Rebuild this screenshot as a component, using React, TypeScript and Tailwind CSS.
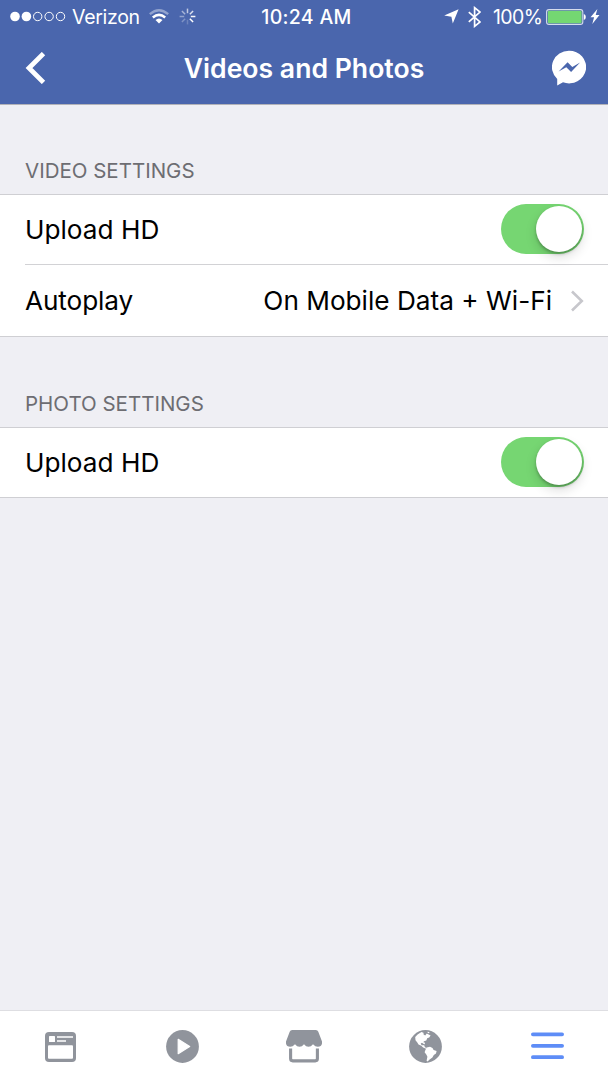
import { useState } from "react";
import type { ReactNode } from "react";

const SPINNER_OPACITY = [0.65, 0.8, 0.95, 1, 0.2, 0.3, 0.4, 0.5];

function StatusBar() {
  return (
    <div className="grid h-[34px] grid-cols-[1fr_auto_1fr] items-center text-[20px] leading-[34px]">
      <div className="flex items-center pl-2.5">
        <svg className="mb-px h-[11px] w-[56px]" viewBox="0 0 56 11" aria-hidden>
          <circle cx="5" cy="5.5" r="4.8" fill="white" />
          <circle cx="16.4" cy="5.5" r="4.8" fill="white" />
          {[27.7, 39.1, 50.5].map((cx) => (
            <circle key={cx} cx={cx} cy="5.5" r="4.2" fill="none" stroke="white" strokeWidth="1" />
          ))}
        </svg>
        <span className="ml-[6px] w-[77px] text-[19.5px] tracking-[-0.3px]">Verizon</span>
        <svg className="mb-px h-[15px] w-[20px]" viewBox="0 0 20 15" fill="none" aria-hidden>
          <path d="M.8 5.2Q10-2.8 19.2 5.2" stroke="white" strokeOpacity=".4" strokeWidth="2.3" />
          <path d="M3.8 8.5Q10 3.2 16.2 8.5" stroke="white" strokeWidth="2.5" />
          <path d="M6.5 11.1Q10 8.1 13.5 11.1L10 14.6Z" fill="white" />
        </svg>
        <svg className="mb-px ml-2.5 h-[17px] w-[17px]" viewBox="0 0 17 17" aria-hidden>
          {SPINNER_OPACITY.map((opacity, i) => (
            <path
              key={i}
              d="M8.5.6V5.2"
              stroke="white"
              strokeWidth="1.5"
              strokeOpacity={opacity}
              transform={`rotate(${i * 45} 8.5 8.5)`}
            />
          ))}
        </svg>
      </div>
      <span className="pl-[5px] text-[19.5px] font-medium tracking-[0.3px]">10:24 AM</span>
      <div className="flex items-center justify-end pr-[8px]">
        <svg className="mb-px h-[15px] w-[15px]" viewBox="0 0 15 15" aria-hidden>
          <path d="M14.6.2L8.8 14.5 7.4 7.8.2 6.5Z" fill="white" />
        </svg>
        <svg className="mb-px ml-[9px] h-[22px] w-[13px]" viewBox="0 0 13 22" fill="none" aria-hidden>
          <path d="M.8 6.1L12 15.9 6.6 20.3V1.7L12 6.1.8 15.9" stroke="white" strokeWidth="1.7" />
        </svg>
        <span className="ml-[12px] w-[53px] whitespace-nowrap text-[19.5px] tracking-[-0.6px]">100%</span>
        <svg className="mb-px h-[16px] w-[40px]" viewBox="0 0 40 16" aria-hidden>
          <rect x=".6" y=".6" width="36.2" height="14.8" rx="2.4" fill="none" stroke="#d5dcec" strokeWidth="1.1" />
          <rect x="1.8" y="1.8" width="33.8" height="12.4" rx="1.2" fill="#74d772" />
          <path d="M37.8 5Q39.8 5.5 39.8 8T37.8 11Z" fill="white" />
        </svg>
        <svg className="mb-px ml-[4px] h-[15px] w-[10px]" viewBox="0 0 10 15" aria-hidden>
          <path d="M7.4 0L.5 8.2H4.1L2.3 15 9.5 6.1H5.7Z" fill="white" />
        </svg>
      </div>
    </div>
  );
}

function NavBar() {
  return (
    <div className="grid h-[68px] grid-cols-[1fr_auto_1fr] items-center">
      <button type="button" aria-label="Back" className="pl-[25px]">
        <svg className="h-[32px] w-[21px]" viewBox="0 0 21 32" fill="none" aria-hidden>
          <path d="M18.5 1.6L4 16 18.5 30.4" stroke="white" strokeWidth="4.8" />
        </svg>
      </button>
      <h1 className="pt-[2px] text-[26.6px] font-semibold">Videos and Photos</h1>
      <button type="button" aria-label="Messenger" className="flex justify-end pr-[22px]">
        <svg className="h-[36px] w-[34px]" viewBox="0 0 34 36" aria-hidden>
          <path
            d="M17 .8A17 16.3 0 0 0 5.2 28.9V35.6L11 32.3A17 16.3 0 1 0 17 .8Z"
            fill="white"
          />
          <path d="M6.6 21.6L15.6 12.2 20.3 16.9 28.1 12.5 19.1 22 14.3 17.3Z" fill="#4a66ad" />
        </svg>
      </button>
    </div>
  );
}

function Toggle({ label }: { label: string }) {
  const [on, setOn] = useState(true);
  return (
    <button
      type="button"
      role="switch"
      aria-checked={on}
      aria-label={label}
      onClick={() => setOn(!on)}
      className={`mb-px flex h-[50px] w-[83px] items-center rounded-full px-[2px] ${
        on ? "justify-end bg-[#76d672]" : "justify-start bg-[#e5e5ea]"
      }`}
    >
      <span className="h-[46px] w-[46px] rounded-full bg-white shadow-[0_5px_12px_rgba(0,0,0,0.14),0_2px_3px_rgba(0,0,0,0.25)]" />
    </button>
  );
}

function Section({ title, children }: { title: string; children: ReactNode }) {
  return (
    <section>
      <h2 className="flex h-[90px] items-end pb-[8px] pl-[25px] text-[20.5px] leading-[30px] text-[#6d6d72]">
        {title}
      </h2>
      <div className="border-y border-[#cfcfd3] bg-white pl-[25px] text-[26.2px] text-black">
        {children}
      </div>
    </section>
  );
}

function NewsFeedIcon() {
  return (
    <svg className="h-[30px] w-[31px]" viewBox="0 0 31 30" aria-hidden>
      <rect width="31" height="30" rx="4" fill="#90949c" />
      <rect x="4" y="4" width="6" height="6" rx=".6" fill="white" />
      <path d="M12 5H28M12 9H21" stroke="white" strokeWidth="1.7" />
      <rect x="3" y="13.2" width="25" height="13.5" rx="1" fill="white" />
    </svg>
  );
}

function PlayIcon() {
  return (
    <svg className="h-[33px] w-[33px]" viewBox="0 0 33 33" aria-hidden>
      <circle cx="16.5" cy="16.5" r="16.4" fill="#90949c" />
      <path d="M12.2 9.3L23.7 16.5 12.2 23.7Z" fill="white" stroke="white" strokeWidth="1.2" strokeLinejoin="round" />
    </svg>
  );
}

function StoreIcon() {
  return (
    <svg className="h-[33px] w-[36px]" viewBox="0 0 36 33" fill="#90949c" aria-hidden>
      <path d="M6.2 0H29.8Q31.7 0 32.3 1.8L36 11.5V13.5Q35.4 16.8 31.8 16.8 29.3 16.8 27 14.2 25 16.8 22.5 16.8 20 16.8 18 14.2 16 16.8 13.5 16.8 11 16.8 9 14.2 6.7 16.8 4.2 16.8.6 16.8 0 13.5V11.5L3.7 1.8Q4.3 0 6.2 0Z" />
      <path
        d="M4.6 18.6V28.6Q4.6 30.9 6.8 30.9H29.2Q31.4 30.9 31.4 28.6V18.6"
        fill="none"
        stroke="#90949c"
        strokeWidth="3.1"
      />
    </svg>
  );
}

function GlobeIcon() {
  return (
    <svg className="h-[33px] w-[33px]" viewBox="0 0 33 33" aria-hidden>
      <circle cx="16.5" cy="16.5" r="16.4" fill="#90949c" />
      <g fill="white">
        <path d="M8.6 4.4L12.4 2 14.5 2.8 14.6 4.6 16.2 5.4 17.8 3.6 21.6 5.4 20.2 7.6 18.2 8.2 17.3 10.4 15 11.3 14.3 12.2 15.7 12.6 16 14.2 14.7 14.1 13 12.8 11.7 13.4 12.6 15.2 15.2 15.2 15.9 17.3 17.7 18 17 18.8 14.1 17.5 12.3 15.8 9.5 14.4 8.3 12.5 6.5 10.3 6.2 7Z" />
        <path d="M17.6 17.6L21 16.7 23.5 17.9 24.6 20 27.6 21 27 23.4 24.8 25 23.4 27.4 20.6 29.4 18.6 31.4 17.6 30.8 18.4 26.7 17.3 24.5 15.6 22.2 16.4 20.1Z" />
        <path d="M18.4 1.7L20.4 2 20.2 3.2 18.8 3Z" />
      </g>
    </svg>
  );
}

function MenuIcon() {
  return (
    <svg className="mb-px h-[28px] w-[33px]" viewBox="0 0 33 28" aria-hidden>
      <path d="M1.9 2.3H31.1M1.9 13.8H31.1M1.9 25.2H31.1" stroke="#5e8df7" strokeWidth="3.8" strokeLinecap="round" />
    </svg>
  );
}

const TABS = [
  { label: "News Feed", Icon: NewsFeedIcon },
  { label: "Videos", Icon: PlayIcon },
  { label: "Marketplace", Icon: StoreIcon },
  { label: "Notifications", Icon: GlobeIcon },
  { label: "Menu", Icon: MenuIcon },
];

export default function App() {
  return (
    <div className="flex h-[1082px] w-[608px] flex-col bg-[#efeff4] font-[Inter,sans-serif]">
      <header className="h-[105px] border-b border-[#b2b2b8] bg-[#4a66ad] text-white">
        <StatusBar />
        <NavBar />
      </header>

      {/* first section tucks under the header hairline */}
      <main className="-mt-px flex-1">
        <Section title="VIDEO SETTINGS">
          <div className="flex h-[70px] items-center justify-between border-b border-[#d2d2d5] pr-[24px]">
            <span>Upload HD</span>
            <Toggle label="Upload HD videos" />
          </div>
          <div className="flex h-[71px] items-center pr-[24px]">
            <span className="flex-1 tracking-[-0.1px]">Autoplay</span>
            <span>On Mobile Data + Wi-Fi</span>
            <svg className="ml-[18px] h-[22px] w-[14px]" viewBox="0 0 14 22" fill="none" aria-hidden>
              <path d="M2 1.5L11.8 11 2 20.5" stroke="#c7c7cc" strokeWidth="2.6" />
            </svg>
          </div>
        </Section>
        <Section title="PHOTO SETTINGS">
          <div className="flex h-[69px] items-center justify-between pr-[24px]">
            <span>Upload HD</span>
            <Toggle label="Upload HD photos" />
          </div>
        </Section>
      </main>

      <nav className="grid h-[72px] grid-cols-5 border-t border-[#dedee2] bg-white">
        {TABS.map(({ label, Icon }) => (
          <button key={label} type="button" aria-label={label} className="flex items-center justify-center">
            <Icon />
          </button>
        ))}
      </nav>
    </div>
  );
}
